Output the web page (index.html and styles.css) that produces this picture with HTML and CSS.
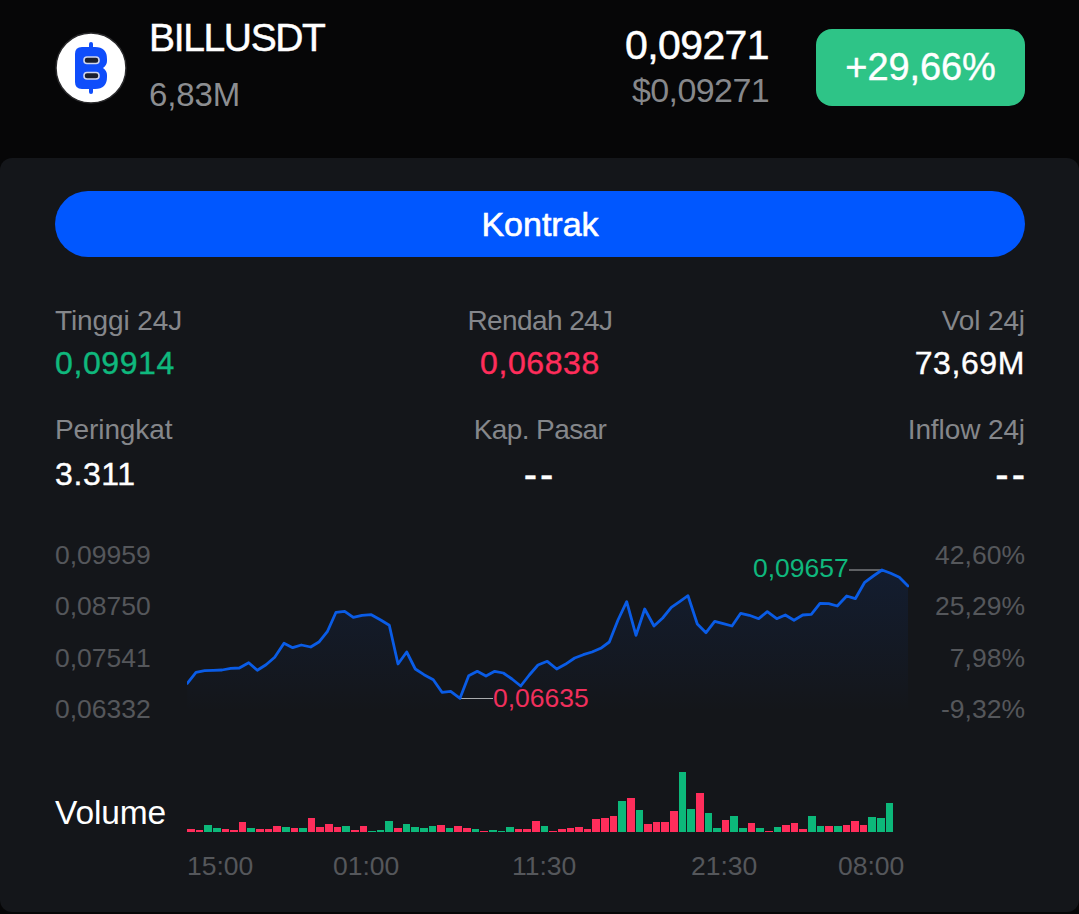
FILE: index.html
```html
<!DOCTYPE html>
<html lang="id">
<head>
<meta charset="utf-8">
<title>BILLUSDT</title>
<link rel="stylesheet" href="styles.css">
</head>
<body>
<header class="top">
  <svg class="logo" viewBox="0 0 72 72" aria-hidden="true">
    <circle cx="36" cy="36" r="35" fill="#fff" stroke="#2a2a2c" stroke-width="1.5"/>
    <rect x="34" y="10" width="4" height="52" rx="2" fill="#0f4dfb"/>
    <path d="M27 15H40Q52 15 52 27V29Q52 33 48 36Q52 39 52 43V45Q52 57 40 57H27Q20 57 20 50V22Q20 15 27 15Z" fill="#0f4dfb"/>
    <rect x="29" y="25" width="15" height="6.5" rx="3" fill="#1b1f2e" stroke="#cfd5ee" stroke-width="1.6"/>
    <rect x="29" y="40.5" width="15" height="6.5" rx="3" fill="#1b1f2e" stroke="#cfd5ee" stroke-width="1.6"/>
  </svg>
  <div class="name">
    <div class="symbol">BILLUSDT</div>
    <div class="subvol">6,83M</div>
  </div>
  <div class="price">
    <div class="last">0,09271</div>
    <div class="usd">$0,09271</div>
  </div>
  <div class="badge">+29,66%</div>
</header>
<main class="panel">
  <div class="cta">Kontrak</div>
  <section class="stats">
    <div class="stat"><div class="lbl">Tinggi 24J</div><div class="val up">0,09914</div></div>
    <div class="stat mid"><div class="lbl">Rendah 24J</div><div class="val down">0,06838</div></div>
    <div class="stat end"><div class="lbl">Vol 24j</div><div class="val">73,69M</div></div>
    <div class="stat low"><div class="lbl">Peringkat</div><div class="val">3.311</div></div>
    <div class="stat low mid"><div class="lbl">Kap. Pasar</div><div class="val"><span class="dash">--</span></div></div>
    <div class="stat low end"><div class="lbl">Inflow 24j</div><div class="val"><span class="dash">--</span></div></div>
  </section>
  <section class="chart">
    <div class="axis">
      <span>0,09959</span><span>0,08750</span><span>0,07541</span><span>0,06332</span>
    </div>
    <svg class="plot" viewBox="187 529 722 205" aria-hidden="false">
      <defs>
        <linearGradient id="area" x1="0" y1="570" x2="0" y2="712" gradientUnits="userSpaceOnUse">
          <stop offset="0" stop-color="#0b55e0" stop-opacity=".11"/>
          <stop offset="1" stop-color="#0b55e0" stop-opacity="0"/>
        </linearGradient>
      </defs>
      <polygon fill="url(#area)" points="187.3,712 187.3,683.3 196,672.3 204.7,670.7 213.3,670.3 222,670 230.7,668.3 239.3,668 248.7,662.7 257.3,670.3 266,664.7 274.7,657.3 284,643.3 292.7,647.7 301.3,645 310.7,647 319.3,641.7 327.3,631.7 336,612.3 344.7,611.3 353.3,617.3 362,615.3 371.3,614.7 380.7,620 389.3,625.3 398,664 406.7,652 415.3,669 424,674.7 433.3,679.7 442,692.3 450.7,691.3 460,698.3 468.7,675.7 477.3,671.3 486,676 494.7,671.3 503.3,673 512,679 520.7,686 529.3,675 538,665 547.3,661.3 556.7,669 565.3,664.3 574.7,658 583.3,654.7 592,652 600.7,648.3 609.3,642 618,620 626.7,601.7 636,635.3 644.7,609 654,626 662.7,618 671.3,607.3 680,601.3 688,595.7 697.3,624 706,632.7 714.7,621.3 723.3,623.7 732,626 740.7,613.3 749.3,615.3 758.7,618.7 767.3,611.7 776.7,618.7 785.3,615 794,620.3 802.7,615 811.3,614.3 820,603.3 828.7,603.7 837.3,606 846.7,596 855.3,598.7 864.7,582.3 873.3,576 882,570 890.7,573.3 899.3,577.3 908,586 908,712"/>
      <line class="tick" x1="460" y1="698.5" x2="493" y2="698.5"/>
      <line class="tick" x1="849" y1="570" x2="882" y2="570"/>
      <polyline class="line" points="187.3,683.3 196,672.3 204.7,670.7 213.3,670.3 222,670 230.7,668.3 239.3,668 248.7,662.7 257.3,670.3 266,664.7 274.7,657.3 284,643.3 292.7,647.7 301.3,645 310.7,647 319.3,641.7 327.3,631.7 336,612.3 344.7,611.3 353.3,617.3 362,615.3 371.3,614.7 380.7,620 389.3,625.3 398,664 406.7,652 415.3,669 424,674.7 433.3,679.7 442,692.3 450.7,691.3 460,698.3 468.7,675.7 477.3,671.3 486,676 494.7,671.3 503.3,673 512,679 520.7,686 529.3,675 538,665 547.3,661.3 556.7,669 565.3,664.3 574.7,658 583.3,654.7 592,652 600.7,648.3 609.3,642 618,620 626.7,601.7 636,635.3 644.7,609 654,626 662.7,618 671.3,607.3 680,601.3 688,595.7 697.3,624 706,632.7 714.7,621.3 723.3,623.7 732,626 740.7,613.3 749.3,615.3 758.7,618.7 767.3,611.7 776.7,618.7 785.3,615 794,620.3 802.7,615 811.3,614.3 820,603.3 828.7,603.7 837.3,606 846.7,596 855.3,598.7 864.7,582.3 873.3,576 882,570 890.7,573.3 899.3,577.3 908,586"/>
      <text class="note down-fill" x="493" y="707">0,06635</text>
      <text class="note up-fill" x="753" y="577">0,09657</text>
    </svg>
    <div class="axis end">
      <span>42,60%</span><span>25,29%</span><span>7,98%</span><span>-9,32%</span>
    </div>
  </section>
  <section class="volume">
    <div class="vol-label">Volume</div>
    <div class="bars" id="bars"></div>
  </section>
  <div class="times">
    <span>15:00</span><span>01:00</span><span>11:30</span><span>21:30</span><span>08:00</span>
  </div>
</main>
<script src="bars.js"></script>
</body>
</html>
```

FILE: bars.js
```js
var data = [[3,0],[1.7,0],[6.7,1],[4,1],[2.7,0],[1.7,0],[9.7,0],[4.3,1],[3.3,0],[3,0],[6,0],[5,1],[3.7,0],[4.3,1],[14,0],[5,0],[7.7,0],[5.3,0],[6,1],[2.3,0],[6,0],[1.3,1],[1.7,1],[11.3,1],[4,0],[8.3,1],[5,1],[4,1],[5.7,1],[7,0],[3.7,1],[6.3,0],[3.7,0],[3,1],[1.3,0],[1.7,1],[.7,1],[5.3,1],[3,0],[3,0],[11,0],[5.7,1],[1,0],[2.7,0],[3.7,0],[4.7,0],[3.3,0],[12.7,0],[13.7,0],[15.7,0],[31.3,1],[33.7,0],[22,1],[8,0],[10.3,0],[10.3,0],[21.3,0],[59.7,1],[23,1],[39.3,0],[19,1],[4,1],[11.7,0],[16.3,1],[3.7,1],[8.7,0],[4,1],[1.3,0],[4.7,1],[7,0],[8.7,0],[2.7,0],[16,1],[5.7,1],[6.3,0],[6,1],[7.3,0],[11,0],[7.3,0],[15,1],[14,1],[29,1]];
var host = document.getElementById('bars');
data.forEach(function (d) {
  var bar = document.createElement('i');
  bar.className = d[1] ? 'bar up-bar' : 'bar down-bar';
  bar.style.height = d[0] + 'px';
  host.appendChild(bar);
});
```

FILE: styles.css
```css
* { box-sizing: border-box; }
html, body { margin: 0; padding: 0; }
body {
  width: 1079px;
  height: 914px;
  overflow: hidden;
  background: #060607;
  color: #fff;
  font-family: "Liberation Sans", Arial, sans-serif;
}
.top {
  height: 158px;
  display: flex;
  align-items: flex-start;
  padding: 0 54px 0 55px;
}
.logo { width: 72px; height: 72px; margin-top: 32px; flex: none; }
.name { margin-left: 22px; flex: 1; }
.symbol { font-size: 39px; line-height: 44px; margin-top: 16px; letter-spacing: -1.35px; -webkit-text-stroke: .5px #fff; }
.subvol { font-size: 33px; line-height: 40px; margin-top: 15px; color: #8c8e91; letter-spacing: -.1px; }
.price { text-align: right; margin-right: 47px; }
.last { font-size: 41px; line-height: 44px; margin-top: 23px; letter-spacing: -.6px; -webkit-text-stroke: .5px #fff; }
.usd { font-size: 34px; line-height: 40px; margin-top: 3px; color: #86888b; letter-spacing: -.6px; }
.badge {
  width: 209px;
  height: 77px;
  margin-top: 29px;
  border-radius: 16px;
  background: #2ec487;
  display: flex;
  align-items: center;
  justify-content: center;
  font-size: 38px;
  letter-spacing: -.1px;
  -webkit-text-stroke: .4px #fff;
}
.panel {
  height: 754px;
  background: #14161a;
  border-radius: 12px;
  padding: 33px 54px 0 55px;
}
.cta {
  height: 66px;
  border-radius: 33px;
  background: #0057ff;
  display: flex;
  align-items: center;
  justify-content: center;
  font-size: 34px;
  -webkit-text-stroke: .6px #fff;
}
.stats {
  display: grid;
  grid-template-columns: 1fr 1fr 1fr;
  margin-top: 44px;
}
.stat { height: 109px; }
.stat.low { height: 60px; }
.mid { text-align: center; }
.end { text-align: right; }
.lbl { font-size: 28px; line-height: 40px; color: #85878b; letter-spacing: -.1px; }
.mid .lbl { letter-spacing: -.6px; }
.val { font-size: 32px; line-height: 42px; margin-top: 1px; letter-spacing: .6px; -webkit-text-stroke: .4px currentColor; }
.low .val { margin-top: 3px; }
.dash { font-size: 40px; letter-spacing: 3px; }
.end .dash { margin-right: -3px; }
.up { color: #0fb87d; }
.down { color: #ff2d5b; }
.chart {
  display: grid;
  grid-template-columns: 132px 722px 1fr;
  height: 205px;
  margin-top: 59px;
}
.axis {
  display: flex;
  flex-direction: column;
  padding-top: 1px;
  color: #55575b;
  font-size: 26.5px;
  line-height: 51.33px;
}
.axis.end { text-align: right; }
.plot { width: 722px; height: 205px; display: block; }
.line { fill: none; stroke: #0a5ce6; stroke-width: 2.8; stroke-linejoin: round; stroke-linecap: round; }
.tick { stroke: #a9abae; stroke-width: 1; }
.note { font-family: "Liberation Sans", Arial, sans-serif; font-size: 26.5px; }
.down-fill { fill: #f02f5c; }
.up-fill { fill: #0fb87d; }
.volume {
  display: grid;
  grid-template-columns: 132px 1fr;
  align-items: end;
  height: 68px;
  margin-top: 30px;
}
.vol-label { font-size: 33.5px; line-height: 40px; letter-spacing: -.1px; margin-bottom: -1px; }
.bars { display: flex; align-items: flex-end; gap: 1px; height: 62px; }
.bar { display: block; width: 7.64px; flex: none; }
.up-bar { background: #0cb87a; }
.down-bar { background: #ff2d5b; }
.times {
  display: grid;
  grid-template-columns: 146px 179px 179px 147px 66px;
  margin: 16px 0 0 132px;
  color: #55575b;
  font-size: 26.5px;
  line-height: 36px;
}
```
